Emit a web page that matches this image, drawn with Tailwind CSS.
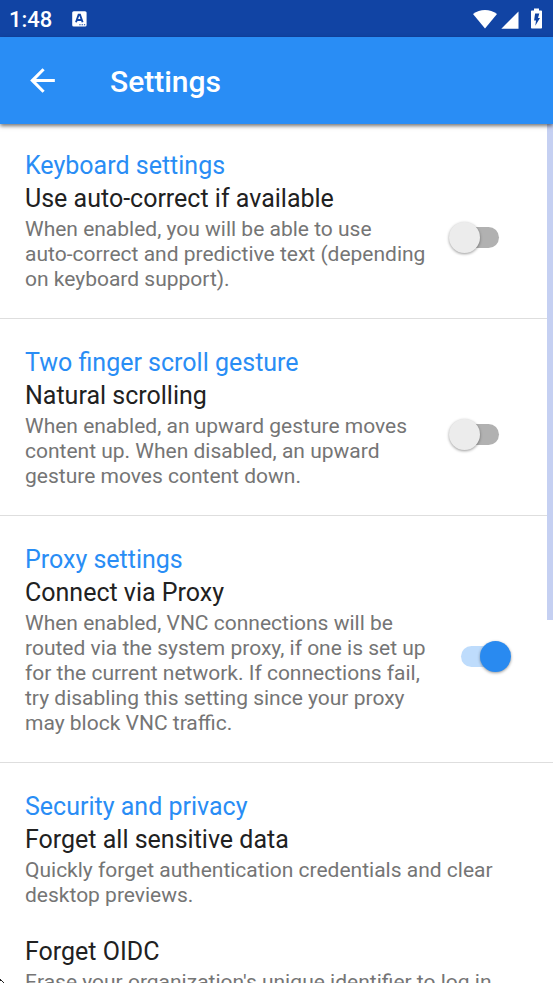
<!DOCTYPE html>
<html lang="en">
<head>
<meta charset="utf-8">
<meta name="viewport" content="width=device-width, initial-scale=1">
<title>Settings</title>
<script src="https://cdn.jsdelivr.net/npm/@tailwindcss/browser@4"></script>
</head>
<body class="relative flex h-screen flex-col overflow-hidden bg-white font-['Roboto',sans-serif] text-[#212121]">
  <div class="flex h-[37px] shrink-0 items-center bg-[#1144a4] pl-[9px] pr-[11px] text-white">
    <span class="pt-[2px] text-[22px] font-medium leading-[35px]">1:48</span>
    <svg class="ml-5 h-4 w-[15px]" viewBox="0 0 15 16" aria-hidden="true"><rect x="0.2" y="0.2" width="14.4" height="15.4" rx="1.6" fill="#fff"/><path d="M4 11.200 6.600 3.800H8L10.600 11.200M5.300 9h4" fill="none" stroke="#1144a4" stroke-width="1.900"/><path d="M7.3 13.8h1.3M9.6 13.8h1.3M11.9 13.8h1.3" stroke="#1144a4" stroke-width="1.1"/></svg>
    <div class="ml-auto flex items-end gap-1">
      <svg class="h-[19px] w-6" viewBox="0 0 24 19" aria-hidden="true"><path d="M0 4Q5.500 0 12 0T24 4L12 18.500Z" fill="#fff"/></svg>
      <svg class="h-[19px] w-[18px]" viewBox="0 0 18 19" aria-hidden="true"><path d="M17.500 1.500V18.800H0.300Z" fill="#fff"/></svg>
      <svg class="ml-2 h-[21px] w-[11px]" viewBox="0 0 11 21" aria-hidden="true"><path d="M3 0.500h5v2h2.200q.8 0 .8.800v16.400q0 .8-.8.800H.8q-.8 0-.8-.8V3.300q0-.8.8-.8H3Z" fill="#fff"/><path d="M4.100 5.500h4.200L7 10h2L4.300 17.700 5 12.400H3.100Z" fill="#1144a4"/></svg>
    </div>
  </div>
  <header class="relative z-10 flex h-[87px] shrink-0 items-center bg-[#298df5] pl-6 text-white shadow-[0_2px_4px_rgba(0,0,0,0.55)]">
    <button type="button" aria-label="Back" class="flex size-9 items-center justify-center">
      <svg class="size-[37px] shrink-0" viewBox="0 0 24 24" aria-hidden="true"><path d="M20 11H7.830l5.590-5.590L12 4l-8 8 8 8 1.410-1.410L7.830 13H20v-2z" fill="#fff"/></svg>
    </button>
    <h1 class="ml-[50px] pt-[2px] text-[30px] font-medium leading-[36px]">Settings</h1>
  </header>
  <main class="min-h-0 flex-1 overflow-hidden">
    <section class="border-b border-[#dedede] pt-[25px] pb-[26px] pl-[25px]">
      <h2 class="text-[25px] leading-[33px] text-[#298df5]">Keyboard settings</h2>
      <div class="flex items-center pr-[54px]">
        <label for="autocorrect" class="min-w-0 flex-1">
          <span class="block text-[25px] leading-[33px]">Use auto-correct if available</span>
          <span class="mt-[2px] block text-[21px] leading-[25px] text-[#757575]">When enabled, you will be able to use<br>auto-correct and predictive text (depending<br>on keyboard support).</span>
        </label>
        <input id="autocorrect" type="checkbox" role="switch" class="relative h-[31px] w-[50px] shrink-0 appearance-none before:absolute before:top-[5px] before:right-0 before:h-[21px] before:w-11 before:rounded-full before:bg-[#b1b1b1] after:absolute after:top-0 after:left-0 after:size-[31px] after:rounded-full after:bg-[#ececec] after:shadow-[0_1px_3px_rgba(0,0,0,0.4)] checked:before:right-auto checked:before:left-0 checked:before:bg-[#bedcfc] checked:after:left-[19px] checked:after:bg-[#298af0]">
      </div>
    </section>
    <section class="border-b border-[#dedede] pt-[27px] pb-[26px] pl-[25px]">
      <h2 class="text-[25px] leading-[33px] text-[#298df5]">Two finger scroll gesture</h2>
      <div class="flex items-center pr-[54px]">
        <label for="natural" class="min-w-0 flex-1">
          <span class="block text-[25px] leading-[33px]">Natural scrolling</span>
          <span class="mt-[2px] block text-[21px] leading-[25px] text-[#757575]">When enabled, an upward gesture moves<br>content up. When disabled, an upward<br>gesture moves content down.</span>
        </label>
        <input id="natural" type="checkbox" role="switch" class="relative h-[31px] w-[50px] shrink-0 appearance-none before:absolute before:top-[5px] before:right-0 before:h-[21px] before:w-11 before:rounded-full before:bg-[#b1b1b1] after:absolute after:top-0 after:left-0 after:size-[31px] after:rounded-full after:bg-[#ececec] after:shadow-[0_1px_3px_rgba(0,0,0,0.4)] checked:before:right-auto checked:before:left-0 checked:before:bg-[#bedcfc] checked:after:left-[19px] checked:after:bg-[#298af0]">
      </div>
    </section>
    <section class="border-b border-[#dedede] pt-[27px] pb-[26px] pl-[25px]">
      <h2 class="text-[25px] leading-[33px] text-[#298df5]">Proxy settings</h2>
      <div class="flex items-center pr-[42px]">
        <label for="proxy" class="min-w-0 flex-1">
          <span class="block text-[25px] leading-[33px]">Connect via Proxy</span>
          <span class="mt-[2px] block text-[21px] leading-[25px] text-[#757575]">When enabled, VNC connections will be<br>routed via the system proxy, if one is set up<br>for the current network. If connections fail,<br>try disabling this setting since your proxy<br>may block VNC traffic.</span>
        </label>
        <input id="proxy" type="checkbox" role="switch" checked class="relative h-[31px] w-[50px] shrink-0 appearance-none before:absolute before:top-[5px] before:right-0 before:h-[21px] before:w-11 before:rounded-full before:bg-[#b1b1b1] after:absolute after:top-0 after:left-0 after:size-[31px] after:rounded-full after:bg-[#ececec] after:shadow-[0_1px_3px_rgba(0,0,0,0.4)] checked:before:right-auto checked:before:left-0 checked:before:bg-[#bedcfc] checked:after:left-[19px] checked:after:bg-[#298af0]">
      </div>
    </section>
    <section class="pt-[27px] pl-[25px]">
      <h2 class="text-[25px] leading-[33px] text-[#298df5]">Security and privacy</h2>
      <button type="button" class="block w-full text-left">
        <span class="block text-[25px] leading-[33px]">Forget all sensitive data</span>
        <span class="mt-[2px] block text-[21px] leading-[25px] text-[#757575]">Quickly forget authentication credentials and clear<br>desktop previews.</span>
      </button>
      <button type="button" class="mt-[27px] block w-full text-left">
        <span class="block text-[25px] leading-[33px]">Forget OIDC</span>
        <span class="mt-[2px] block text-[21px] leading-[25px] text-[#757575]">Erase your organization's unique identifier to log in</span>
      </button>
    </section>
  </main>
  <div class="absolute top-[124px] right-0 h-[496px] w-[6px] bg-[#c5d0f2]"></div>
  <svg class="absolute bottom-0 left-0 h-1 w-1" viewBox="0 0 4 4" aria-hidden="true"><path d="M0 0h1v1h1v1h1v1h1v1H3V3H2V2H0Z" fill="#222"/></svg>
</body>
</html>
